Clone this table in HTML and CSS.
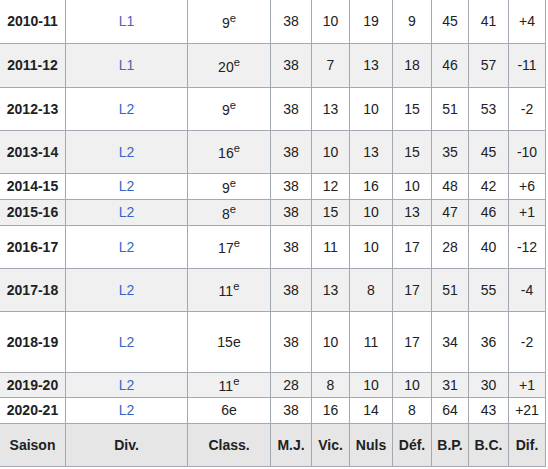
FILE: index.html
```html
<!DOCTYPE html>
<html lang="fr">
<head>
<meta charset="utf-8">
<title>Saisons</title>
<link rel="stylesheet" href="styles.css">
</head>
<body>
<table class="wikitable">
<colgroup>
<col class="c1"><col class="c2"><col class="c3"><col class="c4"><col class="c5"><col class="c6"><col class="c7"><col class="c8"><col class="c9"><col class="c10">
</colgroup>
<tbody>
<tr class="h44"><th class="season">2010-11</th><td><a class="visited">L1</a></td><td>9<sup>e</sup></td><td>38</td><td>10</td><td>19</td><td>9</td><td>45</td><td>41</td><td>+4</td></tr>
<tr class="h44 alt"><th class="season">2011-12</th><td><a class="visited">L1</a></td><td>20<sup>e</sup></td><td>38</td><td>7</td><td>13</td><td>18</td><td>46</td><td>57</td><td>-11</td></tr>
<tr class="h43"><th class="season">2012-13</th><td><a>L2</a></td><td>9<sup>e</sup></td><td>38</td><td>13</td><td>10</td><td>15</td><td>51</td><td>53</td><td>-2</td></tr>
<tr class="h43 alt"><th class="season">2013-14</th><td><a>L2</a></td><td>16<sup>e</sup></td><td>38</td><td>10</td><td>13</td><td>15</td><td>35</td><td>45</td><td>-10</td></tr>
<tr class="h26"><th class="season">2014-15</th><td><a>L2</a></td><td>9<sup>e</sup></td><td>38</td><td>12</td><td>16</td><td>10</td><td>48</td><td>42</td><td>+6</td></tr>
<tr class="h26 alt"><th class="season">2015-16</th><td><a>L2</a></td><td>8<sup>e</sup></td><td>38</td><td>15</td><td>10</td><td>13</td><td>47</td><td>46</td><td>+1</td></tr>
<tr class="h43"><th class="season">2016-17</th><td><a>L2</a></td><td>17<sup>e</sup></td><td>38</td><td>11</td><td>10</td><td>17</td><td>28</td><td>40</td><td>-12</td></tr>
<tr class="h43 alt"><th class="season">2017-18</th><td><a>L2</a></td><td>11<sup>e</sup></td><td>38</td><td>13</td><td>8</td><td>17</td><td>51</td><td>55</td><td>-4</td></tr>
<tr class="h61"><th class="season">2018-19</th><td><a>L2</a></td><td>15e</td><td>38</td><td>10</td><td>11</td><td>17</td><td>34</td><td>36</td><td>-2</td></tr>
<tr class="h25 alt"><th class="season">2019-20</th><td><a>L2</a></td><td>11<sup>e</sup></td><td>28</td><td>8</td><td>10</td><td>10</td><td>31</td><td>30</td><td>+1</td></tr>
<tr class="h26"><th class="season">2020-21</th><td><a>L2</a></td><td>6e</td><td>38</td><td>16</td><td>14</td><td>8</td><td>64</td><td>43</td><td>+21</td></tr>
<tr class="h43 head"><th>Saison</th><th>Div.</th><th>Class.</th><th>M.J.</th><th>Vic.</th><th>Nuls</th><th>Déf.</th><th>B.P.</th><th>B.C.</th><th>Dif.</th></tr>
</tbody>
</table>
</body>
</html>
```

FILE: styles.css
```css
html, body {
  margin: 0;
  padding: 0;
  background: #ffffff;
}
body {
  font-family: "Liberation Sans", Arial, sans-serif;
  font-size: 14px;
  color: #202122;
  overflow: hidden;
}
.wikitable {
  border-collapse: collapse;
  table-layout: fixed;
  width: 547px;
  margin: -1px 0 0 -1px;
  background: #ffffff;
}
.c1 { width: 66px; }
.c2 { width: 122px; }
.c3 { width: 83px; }
.c4 { width: 41px; }
.c5 { width: 38px; }
.c6 { width: 43px; }
.c7 { width: 39px; }
.c8 { width: 37px; }
.c9 { width: 40px; }
.c10 { width: 37px; }
.wikitable th,
.wikitable td {
  border: 1px solid #a2a9b1;
  padding: 0 2px;
  text-align: center;
  vertical-align: middle;
  line-height: 1.15;
  white-space: nowrap;
}
.wikitable th { font-weight: bold; }
.alt { background: #f0f0f0; }
.head { background: #e6e6e6; }
.h44 { height: 44px; }
.h43 { height: 43px; }
.h26 { height: 26px; }
.h25 { height: 25px; }
.h61 { height: 61px; }
a { color: #3366cc; text-decoration: none; }
a.visited { color: #5a5cb5; }
sup {
  font-size: 0.8em;
  line-height: 1;
  vertical-align: super;
}
```
